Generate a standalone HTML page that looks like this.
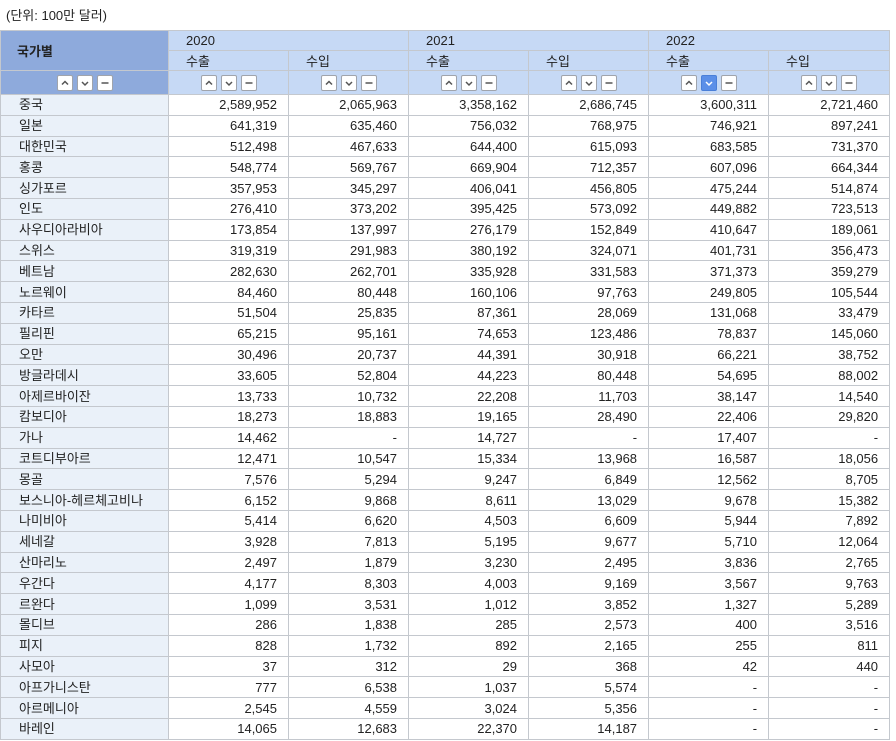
<!DOCTYPE html><html><head><meta charset="utf-8"><style>
body{margin:0;background:#fff;font-family:"Liberation Sans","Noto Sans CJK KR",sans-serif;font-size:13px;color:#222}
.cap{position:absolute;left:6px;top:5px;font-size:13px}
table{position:absolute;left:0;top:30px;border-collapse:collapse;table-layout:fixed;width:889px}
td,th{border:1px solid #c4c8ce;padding:0;font-weight:normal;white-space:nowrap;overflow:hidden}
th{background:#c6d9f5;text-align:left;padding-left:17px;height:19px}
th.c{background:#8eaadc;font-weight:bold;text-align:left;padding-left:16px}
tr.b th{text-align:center;padding:0;height:23px}
tr.b th.c{background:#8eaadc}
td{height:19.8px;text-align:right;padding-right:11px;line-height:19px}
td.n{background:#eaf1f9;text-align:left;padding-left:18px}
.bt{display:inline-block;width:14px;height:14px;border:1px solid #a0a4ac;border-radius:2px;background:#fff;margin:0 2px;vertical-align:middle;position:relative}
.bt svg{position:absolute;left:2px;top:2px}
.bt.on{background:#5b8fe8;border-color:#4a7fd8}
</style></head><body>
<div class="cap">(단위: 100만 달러)</div>
<table>
<colgroup><col style="width:168px"><col style="width:120px"><col style="width:120px"><col style="width:120px"><col style="width:120px"><col style="width:120px"><col style="width:121px"></colgroup>
<tr><th class="c" rowspan="2">국가별</th><th colspan="2">2020</th><th colspan="2">2021</th><th colspan="2">2022</th></tr>
<tr><th>수출</th><th>수입</th><th>수출</th><th>수입</th><th>수출</th><th>수입</th></tr>
<tr class="b" id="btns"></tr>
<tbody id="tb"></tbody>
</table>
<script>
var up='<svg width="10" height="10"><path d="M2 6.5L5 3.5L8 6.5" stroke="#555" stroke-width="1.5" fill="none"/></svg>';
var dn='<svg width="10" height="10"><path d="M2 4L5 7L8 4" stroke="COL" stroke-width="1.5" fill="none"/></svg>';
var mi='<svg width="10" height="10"><path d="M1.5 5H8.5" stroke="#555" stroke-width="1.5"/></svg>';
function g(on){return '<span class="bt">'+up+'</span><span class="bt'+(on?' on':'')+'">'+dn.replace('COL',on?'#fff':'#555')+'</span><span class="bt">'+mi+'</span>';}
var h='<th class="c">'+g(0)+'</th>';for(var i=0;i<6;i++)h+='<th>'+g(i==4)+'</th>';
document.getElementById('btns').innerHTML=h;
var d=`중국|2,589,952|2,065,963|3,358,162|2,686,745|3,600,311|2,721,460
일본|641,319|635,460|756,032|768,975|746,921|897,241
대한민국|512,498|467,633|644,400|615,093|683,585|731,370
홍콩|548,774|569,767|669,904|712,357|607,096|664,344
싱가포르|357,953|345,297|406,041|456,805|475,244|514,874
인도|276,410|373,202|395,425|573,092|449,882|723,513
사우디아라비아|173,854|137,997|276,179|152,849|410,647|189,061
스위스|319,319|291,983|380,192|324,071|401,731|356,473
베트남|282,630|262,701|335,928|331,583|371,373|359,279
노르웨이|84,460|80,448|160,106|97,763|249,805|105,544
카타르|51,504|25,835|87,361|28,069|131,068|33,479
필리핀|65,215|95,161|74,653|123,486|78,837|145,060
오만|30,496|20,737|44,391|30,918|66,221|38,752
방글라데시|33,605|52,804|44,223|80,448|54,695|88,002
아제르바이잔|13,733|10,732|22,208|11,703|38,147|14,540
캄보디아|18,273|18,883|19,165|28,490|22,406|29,820
가나|14,462|-|14,727|-|17,407|-
코트디부아르|12,471|10,547|15,334|13,968|16,587|18,056
몽골|7,576|5,294|9,247|6,849|12,562|8,705
보스니아-헤르체고비나|6,152|9,868|8,611|13,029|9,678|15,382
나미비아|5,414|6,620|4,503|6,609|5,944|7,892
세네갈|3,928|7,813|5,195|9,677|5,710|12,064
산마리노|2,497|1,879|3,230|2,495|3,836|2,765
우간다|4,177|8,303|4,003|9,169|3,567|9,763
르완다|1,099|3,531|1,012|3,852|1,327|5,289
몰디브|286|1,838|285|2,573|400|3,516
피지|828|1,732|892|2,165|255|811
사모아|37|312|29|368|42|440
아프가니스탄|777|6,538|1,037|5,574|-|-
아르메니아|2,545|4,559|3,024|5,356|-|-
바레인|14,065|12,683|22,370|14,187|-|-`.split('\n');
var s='';d.forEach(function(r){var c=r.split('|');s+='<tr><td class="n">'+c[0]+'</td>';for(var i=1;i<7;i++)s+='<td>'+c[i]+'</td>';s+='</tr>';});
document.getElementById('tb').innerHTML=s;
</script>
</body></html>
